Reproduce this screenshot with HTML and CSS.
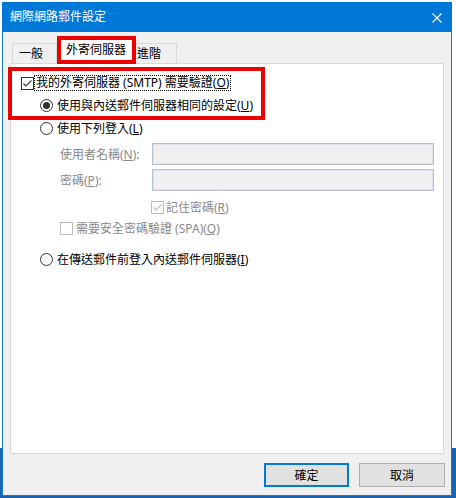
FILE: index.html
```html
<!DOCTYPE html>
<html lang="zh-Hant">
<head>
  <meta charset="UTF-8">
  <meta name="viewport" content="width=device-width, initial-scale=1.0">
  <title>網際網路郵件設定</title>
  <link rel="stylesheet" href="styles.css">
</head>
<body>

  <div class="window">
    <!-- Title Bar -->
    <div class="titlebar">
      <span class="title">網際網路郵件設定</span>
      <svg class="close" width="10" height="10" viewBox="0 0 10 10">
        <path d="M0.5 0.5 L9.5 9.5 M9.5 0.5 L0.5 9.5" stroke="#fff" stroke-width="1.1" fill="none"/>
      </svg>
    </div>

    <div class="content">
      <!-- Tabs -->
      <div class="tabs">
        <div class="tab tab-general">一般</div>
        <div class="tab active">外寄伺服器</div>
        <div class="tab tab-advanced">進階</div>
      </div>

      <!-- Tab Panel -->
      <div class="panel">
        <div class="highlight">
          <div class="row row-check">
            <svg class="box" width="13" height="13" viewBox="0 0 13 13">
              <rect x="0.5" y="0.5" width="12" height="12" fill="#fff" stroke="#333"/>
              <path d="M2.5 6.5 L5 9 L10.5 3.5" stroke="#333" stroke-width="1.1" fill="none"/>
            </svg>
            <span class="text focus">我的外寄伺服器 (SMTP) 需要驗證(<u>O</u>)</span>
          </div>
          <div class="row row-radio">
            <svg class="box" width="13" height="13" viewBox="0 0 13 13">
              <circle cx="6.5" cy="6.5" r="6" fill="#fff" stroke="#333"/>
              <circle cx="6.5" cy="6.5" r="3.5" fill="#333"/>
            </svg>
            <span class="text">使用與內送郵件伺服器相同的設定(<u>U</u>)</span>
          </div>
        </div>

        <div class="row row-radio">
          <svg class="box" width="13" height="13" viewBox="0 0 13 13">
            <circle cx="6.5" cy="6.5" r="6" fill="#fff" stroke="#333"/>
          </svg>
          <span class="text">使用下列登入(<u>L</u>)</span>
        </div>

        <div class="field field-user">
          <span class="field-label">使用者名稱(<u>N</u>):</span>
          <span class="input"></span>
        </div>
        <div class="field field-pass">
          <span class="field-label">密碼(<u>P</u>):</span>
          <span class="input"></span>
        </div>

        <div class="row row-remember disabled">
          <svg class="box" width="13" height="13" viewBox="0 0 13 13">
            <rect x="0.5" y="0.5" width="12" height="12" fill="#fff" stroke="#bcbcbc"/>
            <path d="M2.5 6.5 L5 9 L10.5 3.5" stroke="#bcbcbc" stroke-width="1.1" fill="none"/>
          </svg>
          <span class="text">記住密碼(<u>R</u>)</span>
        </div>
        <div class="row row-spa disabled">
          <svg class="box" width="13" height="13" viewBox="0 0 13 13">
            <rect x="0.5" y="0.5" width="12" height="12" fill="#fff" stroke="#bcbcbc"/>
          </svg>
          <span class="text">需要安全密碼驗證 (SPA)(<u>Q</u>)</span>
        </div>

        <div class="row row-radio row-before">
          <svg class="box" width="13" height="13" viewBox="0 0 13 13">
            <circle cx="6.5" cy="6.5" r="6" fill="#fff" stroke="#333"/>
          </svg>
          <span class="text">在傳送郵件前登入內送郵件伺服器(<u>I</u>)</span>
        </div>
      </div>

      <!-- Buttons -->
      <div class="buttons">
        <button class="button default">確定</button>
        <button class="button">取消</button>
      </div>
    </div>
  </div>

</body>
</html>
```

FILE: styles.css
```css
body {
  margin: 0;
  width: 456px;
  height: 498px;
  overflow: hidden;
  background: linear-gradient(to bottom, #fff 448px, #1c62ad 448px);
  font-family: "Noto Sans", "Noto Sans CJK TC", sans-serif;
  font-size: 12px;
  color: #000;
}

/* Window */
.window {
  margin: 2px 0 0 2px;
  width: 450px;
  height: 494px;
  box-sizing: border-box;
  border: 1px solid #1a78cf;
  border-top: none;
  background: #f0f0f0;
  display: flex;
  flex-direction: column;
}

.titlebar {
  height: 30px;
  margin: 0 -1px;
  background: #0078d7;
  color: #fff;
  display: flex;
  align-items: center;
  justify-content: space-between;
  padding: 0 10px 0 8px;
  flex-shrink: 0;
}

.title {
  line-height: 14px;
}

.close {
  display: block;
  margin-top: 1px;
}

.content {
  flex: 1;
  padding: 4px 7px 0 7px;
  display: flex;
  flex-direction: column;
}

/* Tabs */
.tabs {
  display: flex;
  align-items: flex-end;
  margin-left: 2px;
}

.tab {
  height: 20px;
  box-sizing: border-box;
  border: 1px solid #d9d9d9;
  border-bottom: none;
  background: #f0f0f0;
  line-height: 19px;
}

.tab-general {
  width: 45px;
  padding-left: 6px;
}

.tab-advanced {
  width: 41px;
  padding-left: 1px;
  border-left: none;
}

.tab.active {
  position: relative;
  width: 79px;
  height: 28px;
  margin-bottom: -1px;
  border: 4px solid #ee0000;
  background: #fff;
  padding-left: 5px;
  line-height: 20px;
}

/* Panel */
.panel {
  height: 391px;
  box-sizing: border-box;
  background: #fff;
  border: 1px solid #d9d9d9;
  display: flex;
  flex-direction: column;
}

.highlight {
  width: 257px;
  box-sizing: border-box;
  margin: 3px 0 -2px -3px;
  padding: 2px 0 1px 0;
  border: 4px solid #ee0000;
  display: flex;
  flex-direction: column;
  gap: 2px;
}

.row {
  height: 20px;
  display: flex;
  align-items: center;
  white-space: nowrap;
}

.box {
  display: block;
  flex-shrink: 0;
}

.row-check {
  padding-left: 9px;
}

.row-check .text {
  margin-left: 1px;
}

.focus {
  outline: 1px dotted #000;
  outline-offset: 0;
  padding: 0 1px;
  line-height: 14px;
}

.row-radio {
  padding-left: 29px;
}

.highlight .row-radio {
  padding-left: 28px;
}

.row-radio .text {
  margin-left: 4px;
}

.disabled {
  color: #8a8a8a;
}

.row-remember {
  margin-top: 6px;
  padding-left: 140px;
}

.row-remember .text {
  margin-left: 2px;
}

.row-spa {
  margin-top: 1px;
  padding-left: 49px;
}

.row-spa .text {
  margin-left: 3px;
}

.row-before {
  margin-top: 11px;
}

/* Fields */
.field {
  height: 22px;
  display: flex;
  align-items: center;
  padding-left: 49px;
  color: #8a8a8a;
}

.field-user {
  margin-top: 5px;
}

.field-pass {
  margin-top: 4px;
}

.field-label {
  width: 92px;
  white-space: nowrap;
}

.input {
  width: 282px;
  height: 22px;
  box-sizing: border-box;
  border: 1px solid #b8c2cc;
  box-shadow: inset 0 0 0 1px #dde3e9;
  background: #f0f0f0;
}

/* Buttons */
.buttons {
  display: flex;
  justify-content: flex-end;
  gap: 10px;
  margin: 9px -1px 0 0;
}

.button {
  width: 86px;
  height: 24px;
  box-sizing: border-box;
  border: 1px solid #adadad;
  background: #e1e1e1;
  font-family: inherit;
  font-size: 12px;
  color: #000;
  padding: 0;
}

.button.default {
  width: 85px;
  border: 2px solid #0078d7;
}
```
